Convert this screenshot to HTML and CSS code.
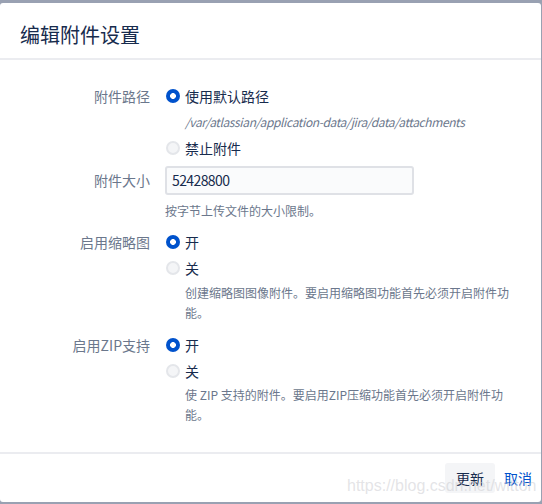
FILE: index.html
```html
<!DOCTYPE html>
<html lang="zh-CN">
<head>
<meta charset="utf-8">
<title>编辑附件设置</title>
<link rel="stylesheet" href="styles.css">
</head>
<body>
<div class="dialog">
  <header class="dlg-header">
    <h2 class="dlg-title">编辑附件设置</h2>
  </header>
  <div class="dlg-body">
    <div class="group g1">
      <div class="label">附件路径</div>
      <div class="field">
        <div class="radio"><span class="dot checked"></span><span>使用默认路径</span></div>
        <div class="path">/var/atlassian/application-data/jira/data/attachments</div>
        <div class="radio"><span class="dot"></span><span>禁止附件</span></div>
      </div>
    </div>
    <div class="group g2">
      <div class="label label-input">附件大小</div>
      <div class="field">
        <div class="text-input">52428800</div>
        <div class="help help-size">按字节上传文件的大小限制。</div>
      </div>
    </div>
    <div class="group g3">
      <div class="label">启用缩略图</div>
      <div class="field">
        <div class="radio"><span class="dot checked"></span><span>开</span></div>
        <div class="radio"><span class="dot"></span><span>关</span></div>
        <div class="help help-indent h3">创建缩略图图像附件。要启用缩略图功能首先必须开启附件功能。</div>
      </div>
    </div>
    <div class="group g4">
      <div class="label">启用ZIP支持</div>
      <div class="field">
        <div class="radio"><span class="dot checked"></span><span>开</span></div>
        <div class="radio"><span class="dot"></span><span>关</span></div>
        <div class="help help-indent h4">使 ZIP 支持的附件。要启用ZIP压缩功能首先必须开启附件功能。</div>
      </div>
    </div>
  </div>
  <footer class="dlg-footer">
    <button class="btn btn-default">更新</button>
    <button class="btn btn-link">取消</button>
  </footer>
  <div class="watermark" aria-hidden="true">https://blog.csdn.net/witton</div>
</div>
</body>
</html>
```
FILE: styles.css
```css
html, body {
  margin: 0;
  padding: 0;
}
body {
  background: #99a1b2;
  width: 542px;
  height: 504px;
  overflow: hidden;
  font-family: "Noto Sans CJK SC", sans-serif;
  color: #172b4d;
  font-size: 14px;
}
.dialog {
  position: relative;
  margin-top: 3px;
  width: 541px;
  height: 499px;
  background: #fff;
  border-radius: 3px;
  display: flex;
  flex-direction: column;
}
.dlg-header {
  padding: 20px 20px 11px 20px;
  border-bottom: 2px solid #ebecf0;
}
.dlg-title {
  margin: 0;
  font-size: 20px;
  line-height: 24px;
  font-weight: 400;
  color: #172b4d;
}
.dlg-body {
  flex: 1;
  padding: 23px 25px 0 0;
}
.group {
  display: grid;
  grid-template-columns: 150px 1fr;
  column-gap: 15px;
}
.g2 { margin-top: 5px; }
.g3 { margin-top: 8px; }
.g4 { margin-top: 9px; }
.label {
  text-align: right;
  line-height: 26px;
  color: #6b778c;
}
.label-input {
  line-height: 29px;
}
.radio {
  display: flex;
  align-items: center;
  height: 26px;
  line-height: 26px;
}
.dot {
  width: 14px;
  height: 14px;
  margin-left: 1px;
  margin-right: 5px;
  border-radius: 50%;
  box-sizing: border-box;
  background: #f4f5f7;
  border: 2px solid #e4e6ea;
  flex: none;
}
.dot.checked {
  border: none;
  background: radial-gradient(circle, #fff 0, #fff 2.6px, #0052cc 3.2px);
}
.path {
  height: 26px;
  line-height: 26px;
  padding-left: 20px;
  font-size: 12px;
  letter-spacing: -0.38px;
  font-style: italic;
  color: #6b778c;
}
.text-input {
  box-sizing: border-box;
  width: 249px;
  height: 29px;
  border: 2px solid #dfe1e6;
  border-radius: 3px;
  background: #fafbfc;
  padding: 0 5px;
  line-height: 25px;
  font-size: 14px;
  letter-spacing: -0.6px;
  color: #172b4d;
}
.help {
  font-size: 12px;
  line-height: 20px;
  color: #6b778c;
}
.help-size { margin-top: 6px; }
.help-indent { padding-left: 20px; }
.h3 { margin-top: 2px; }
.h4 { margin-top: 1px; }
.dlg-footer {
  border-top: 2px solid #ebecf0;
  padding: 9px 0 9px 20px;
  display: flex;
  justify-content: flex-end;
  align-items: center;
}
.btn {
  font-family: "Noto Sans CJK SC", sans-serif;
  font-size: 14px;
  height: 30px;
  line-height: 30px;
  border: none;
  border-radius: 3px;
  margin: 0;
  cursor: pointer;
}
.btn-default {
  background: #f4f5f7;
  color: #172b4d;
  padding: 0 11px;
}
.btn-link {
  background: transparent;
  color: #0052cc;
  padding: 0 9px;
}
.watermark {
  position: absolute;
  left: 347px;
  top: 475px;
  font-family: "Liberation Sans", Arial, sans-serif;
  font-size: 16px;
  line-height: 16px;
  color: rgba(205, 205, 210, 0.55);
  pointer-events: none;
  white-space: nowrap;
}
```
